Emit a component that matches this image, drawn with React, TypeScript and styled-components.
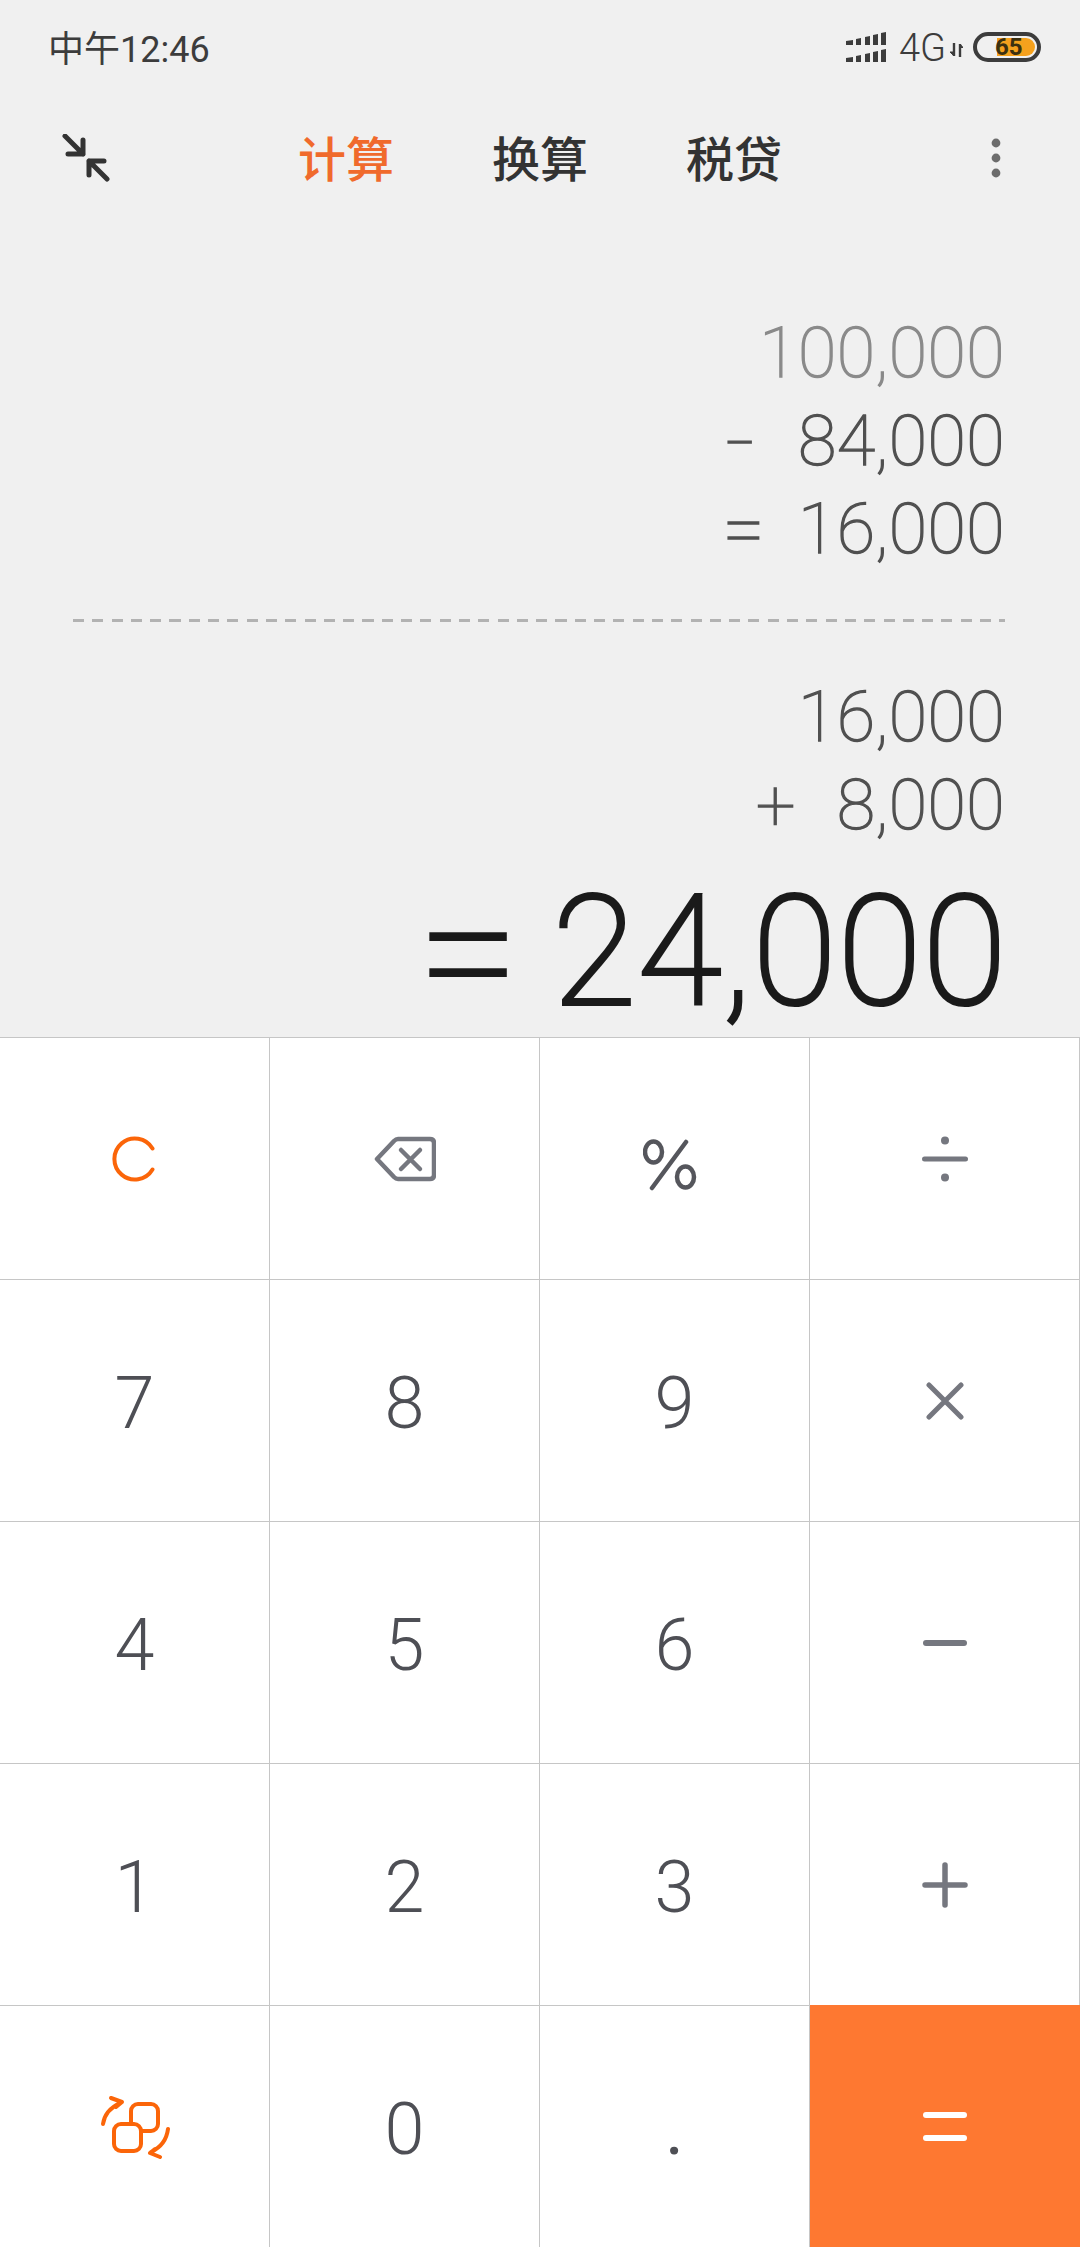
import React from "react";
import styled, { createGlobalStyle } from "styled-components";

const Global = createGlobalStyle`
  html, body { margin: 0; padding: 0; background: #f0f0f0; }
  body { font-family: Roboto, "Noto Sans CJK SC", sans-serif; }
`;

const Page = styled.div`
  width: 1080px;
  height: 2248px;
  display: flex;
  flex-direction: column;
  background: #f0f0f0;
  overflow: hidden;
`;

const StatusBar = styled.div`
  height: 94px;
  padding: 0 39px 0 48px;
  display: flex;
  align-items: center;
  justify-content: space-between;
  color: #3c3c3c;
`;

const Clock = styled.span`
  font-size: 36px;
  font-weight: 400;
  padding-bottom: 2px;
`;

const StatusIcons = styled.div`
  display: flex;
  align-items: center;
`;

const Network = styled.span`
  font-size: 38px;
  font-weight: 300;
  margin: 2px 4px 0 13px;
`;

const ArrowsIcon = styled.svg`
  display: block;
  margin: 6px 10px 0 0;
`;

const Battery = styled.div`
  position: relative;
  width: 68px;
  height: 30px;
  box-sizing: border-box;
  border: 4px solid #3c3c3c;
  border-radius: 15px;
`;

const BatteryFill = styled.div`
  position: absolute;
  left: 20px;
  top: 2px;
  bottom: 2px;
  right: 2px;
  background: #f5a11d;
  border-radius: 0 10px 10px 0;
`;

const BatteryText = styled.span`
  position: absolute;
  left: 18px;
  top: -5px;
  font-size: 24px;
  line-height: 32px;
  font-weight: 700;
  color: #3c3010;
`;

const TopBar = styled.div`
  height: 128px;
  display: grid;
  grid-template-columns: 236px 1fr auto;
  align-items: center;
  padding: 0 79px 0 62px;
`;

const Tabs = styled.div`
  display: flex;
  gap: 98px;
  padding-bottom: 5px;
`;

const Tab = styled.span<{ $active?: boolean }>`
  font-family: "Noto Sans CJK SC", sans-serif;
  font-size: 48px;
  line-height: 60px;
  font-weight: 500;
  color: ${(p) => (p.$active ? "#f06a2c" : "#333333")};
`;

const Display = styled.div`
  flex: 1;
  display: flex;
  flex-direction: column;
  align-items: stretch;
  padding: 87px 75px 0 73px;
`;

const Line = styled.div<{ $faint?: boolean }>`
  height: 88px;
  display: flex;
  justify-content: flex-end;
  align-items: center;
  font-size: 70px;
  font-weight: 100;
  letter-spacing: 0.4px;
  -webkit-text-stroke: 1.4px currentColor;
  color: ${(p) => (p.$faint ? "#8a8a8a" : "#505050")};
`;

const Op = styled.span<{ $gap: number; $size?: number; $stretch?: number }>`
  margin-right: ${(p) => p.$gap}px;
  font-size: ${(p) => p.$size ?? 70}px;
  line-height: 88px;
  transform: scaleX(${(p) => p.$stretch ?? 1});
  transform-origin: right center;
`;

const Dashes = styled.div`
  height: 3px;
  margin: 46px 0 51px;
  background: repeating-linear-gradient(90deg, #b2b2b2 0 11px, transparent 11px 19.3px);
`;

const Result = styled.div`
  margin: 28px -3px 0 0;
  display: flex;
  justify-content: flex-end;
  align-items: center;
  height: 150px;
  font-size: 152px;
  font-weight: 100;
  letter-spacing: 1.8px;
  -webkit-text-stroke: 4.2px currentColor;
  color: #1a1a1a;
`;

const ResultOp = styled.span`
  margin-right: 32px;
  font-size: 180px;
  line-height: 150px;
`;

const Keypad = styled.div`
  display: grid;
  grid-template-columns: repeat(4, 270px);
  grid-template-rows: repeat(5, 242px);
  height: 1211px;
  background: #fff;
`;

const Key = styled.div<{ $primary?: boolean }>`
  display: flex;
  align-items: center;
  justify-content: center;
  box-sizing: border-box;
  border-top: ${(p) => (p.$primary ? "none" : "1px solid #c6c6c6")};
  border-right: ${(p) => (p.$primary ? "none" : "1px solid #c6c6c6")};
  background: ${(p) => (p.$primary ? "#fe7831" : "#fff")};
`;

const Digit = styled.span<{ $bold?: boolean }>`
  font-size: 72px;
  line-height: 84px;
  font-weight: ${(p) => (p.$bold ? 400 : 300)};
  color: #4e4f55;
  padding-top: 6px;
`;

const OpIcon = styled.svg`
  display: block;
`;

const PercentIcon = styled.svg`
  display: block;
  margin: 12px 10px 0 0;
`;

const Compress = () => (
  <svg width="48" height="48" viewBox="0 0 48 48" fill="none" stroke="#333" strokeWidth="5" strokeLinecap="round" strokeLinejoin="round">
    <path d="M3 2 L21 20 M21 6 V20 H6" />
    <path d="M45 45 L27 27 M27 41 V27 H42" />
  </svg>
);

const Dots = () => (
  <svg width="10" height="40" viewBox="0 0 10 40" fill="#6c6c6c">
    <circle cx="5" cy="5" r="4.4" />
    <circle cx="5" cy="20" r="4.4" />
    <circle cx="5" cy="35" r="4.4" />
  </svg>
);

const Signal = () => (
  <svg width="40" height="31" viewBox="0 0 40 31" fill="#3c3c3c">
    {[0, 1].map((r) => (
      <g key={r} transform={`translate(0 ${r * 17})`}>
        <path d="M0 9 L7 8 V13 H0 Z" />
        <path d="M10 7 L15 6 V13 H10 Z" />
        <path d="M19 5 L24 4 V13 H19 Z" />
        <path d="M27 3 L32 2 V13 H27 Z" />
        <path d="M35 1 L40 0 V13 H35 Z" />
      </g>
    ))}
  </svg>
);

const Arrows = () => (
  <ArrowsIcon width="13" height="14" viewBox="0 0 13 14" fill="none" stroke="#3c3c3c" strokeWidth="2.4">
    <path d="M4 0 V13" />
    <path d="M0 9 L4 13 L4 9 Z" fill="#3c3c3c" strokeWidth="1" />
    <path d="M10 14 V1" />
    <path d="M10 1 L13 4.5 L10 4.5 Z" fill="#3c3c3c" strokeWidth="1" />
  </ArrowsIcon>
);

const ClearIcon = () => (
  <OpIcon width="46" height="46" viewBox="0 0 46 46" fill="none" stroke="#fb6509" strokeWidth="4" strokeLinecap="round">
    <path d="M40.5 12.5 A20.5 20.5 0 1 0 40.5 33.5" />
  </OpIcon>
);

const BackIcon = () => (
  <OpIcon width="62" height="46" viewBox="0 0 62 46" fill="none" stroke="#75777f" strokeWidth="4.5" strokeLinecap="round" strokeLinejoin="round">
    <path d="M3 23 L20 5 Q22 3 24 3 H56 Q60 3 60 7 V39 Q60 43 56 43 H24 Q22 43 20 41 Z" />
    <path d="M27 14 L46 33 M46 14 L27 33" />
  </OpIcon>
);

const Percent = () => (
  <PercentIcon width="54" height="52" viewBox="0 0 54 52" fill="none" stroke="#55565c" strokeWidth="4.5" strokeLinecap="round">
    <ellipse cx="10.5" cy="13" rx="8.5" ry="10.5" />
    <ellipse cx="42.5" cy="38" rx="8.5" ry="10.5" />
    <path d="M43 3 L9 49" />
  </PercentIcon>
);

const Divide = () => (
  <OpIcon width="46" height="46" viewBox="0 0 46 46" fill="#75777f">
    <rect x="0" y="20.5" width="46" height="5" rx="2.5" />
    <circle cx="23" cy="4.5" r="4" />
    <circle cx="23" cy="41.5" r="4" />
  </OpIcon>
);

const Times = () => (
  <OpIcon width="38" height="38" viewBox="0 0 38 38" fill="none" stroke="#75777f" strokeWidth="5" strokeLinecap="round">
    <path d="M3 3 L35 35 M35 3 L3 35" />
  </OpIcon>
);

const Minus = () => (
  <OpIcon width="44" height="6" viewBox="0 0 44 6" fill="#75777f">
    <rect width="44" height="6" rx="3" />
  </OpIcon>
);

const Plus = () => (
  <OpIcon width="46" height="46" viewBox="0 0 46 46" fill="none" stroke="#75777f" strokeWidth="5.5" strokeLinecap="round">
    <path d="M3 23 H43 M23 3 V43" />
  </OpIcon>
);

const Equals = () => (
  <OpIcon width="44" height="29" viewBox="0 0 44 29" fill="#fff">
    <rect width="44" height="6" rx="3" />
    <rect y="23" width="44" height="6" rx="3" />
  </OpIcon>
);

const SwitchIcon = () => (
  <OpIcon width="72" height="64" viewBox="0 0 72 64" fill="none" stroke="#fb6509" strokeWidth="4" strokeLinecap="round" strokeLinejoin="round">
    <rect x="32" y="9" width="27" height="27" rx="7" />
    <rect x="15" y="29" width="27" height="27" rx="7" fill="#fff" />
    <path d="M4 29 Q6 15 21 8 M12 3 L23 7 L17 12" />
    <path d="M69 34 Q67 50 52 57 M61 62 L51 58 L56 54" />
  </OpIcon>
);

const keys: { content: React.ReactNode; primary?: boolean }[] = [
  { content: <ClearIcon /> },
  { content: <BackIcon /> },
  { content: <Percent /> },
  { content: <Divide /> },
  { content: <Digit>7</Digit> },
  { content: <Digit>8</Digit> },
  { content: <Digit>9</Digit> },
  { content: <Times /> },
  { content: <Digit>4</Digit> },
  { content: <Digit>5</Digit> },
  { content: <Digit>6</Digit> },
  { content: <Minus /> },
  { content: <Digit>1</Digit> },
  { content: <Digit>2</Digit> },
  { content: <Digit>3</Digit> },
  { content: <Plus /> },
  { content: <SwitchIcon /> },
  { content: <Digit>0</Digit> },
  { content: <Digit $bold>.</Digit> },
  { content: <Equals />, primary: true },
];

export default function App() {
  return (
    <Page>
      <Global />
      <StatusBar>
        <Clock>中午12:46</Clock>
        <StatusIcons>
          <Signal />
          <Network>4G</Network>
          <Arrows />
          <Battery>
            <BatteryFill />
            <BatteryText>65</BatteryText>
          </Battery>
        </StatusIcons>
      </StatusBar>
      <TopBar>
        <Compress />
        <Tabs>
          <Tab $active>计算</Tab>
          <Tab>换算</Tab>
          <Tab>税贷</Tab>
        </Tabs>
        <Dots />
      </TopBar>
      <Display>
        <Line $faint>100,000</Line>
        <Line><Op $gap={43} $stretch={1.4}>-</Op>84,000</Line>
        <Line><Op $gap={33} $size={75}>=</Op>16,000</Line>
        <Dashes />
        <Line>16,000</Line>
        <Line><Op $gap={41}>+</Op>8,000</Line>
        <Result><ResultOp>=</ResultOp>24,000</Result>
      </Display>
      <Keypad>
        {keys.map((k, i) => (
          <Key key={i} $primary={k.primary}>{k.content}</Key>
        ))}
      </Keypad>
    </Page>
  );
}
